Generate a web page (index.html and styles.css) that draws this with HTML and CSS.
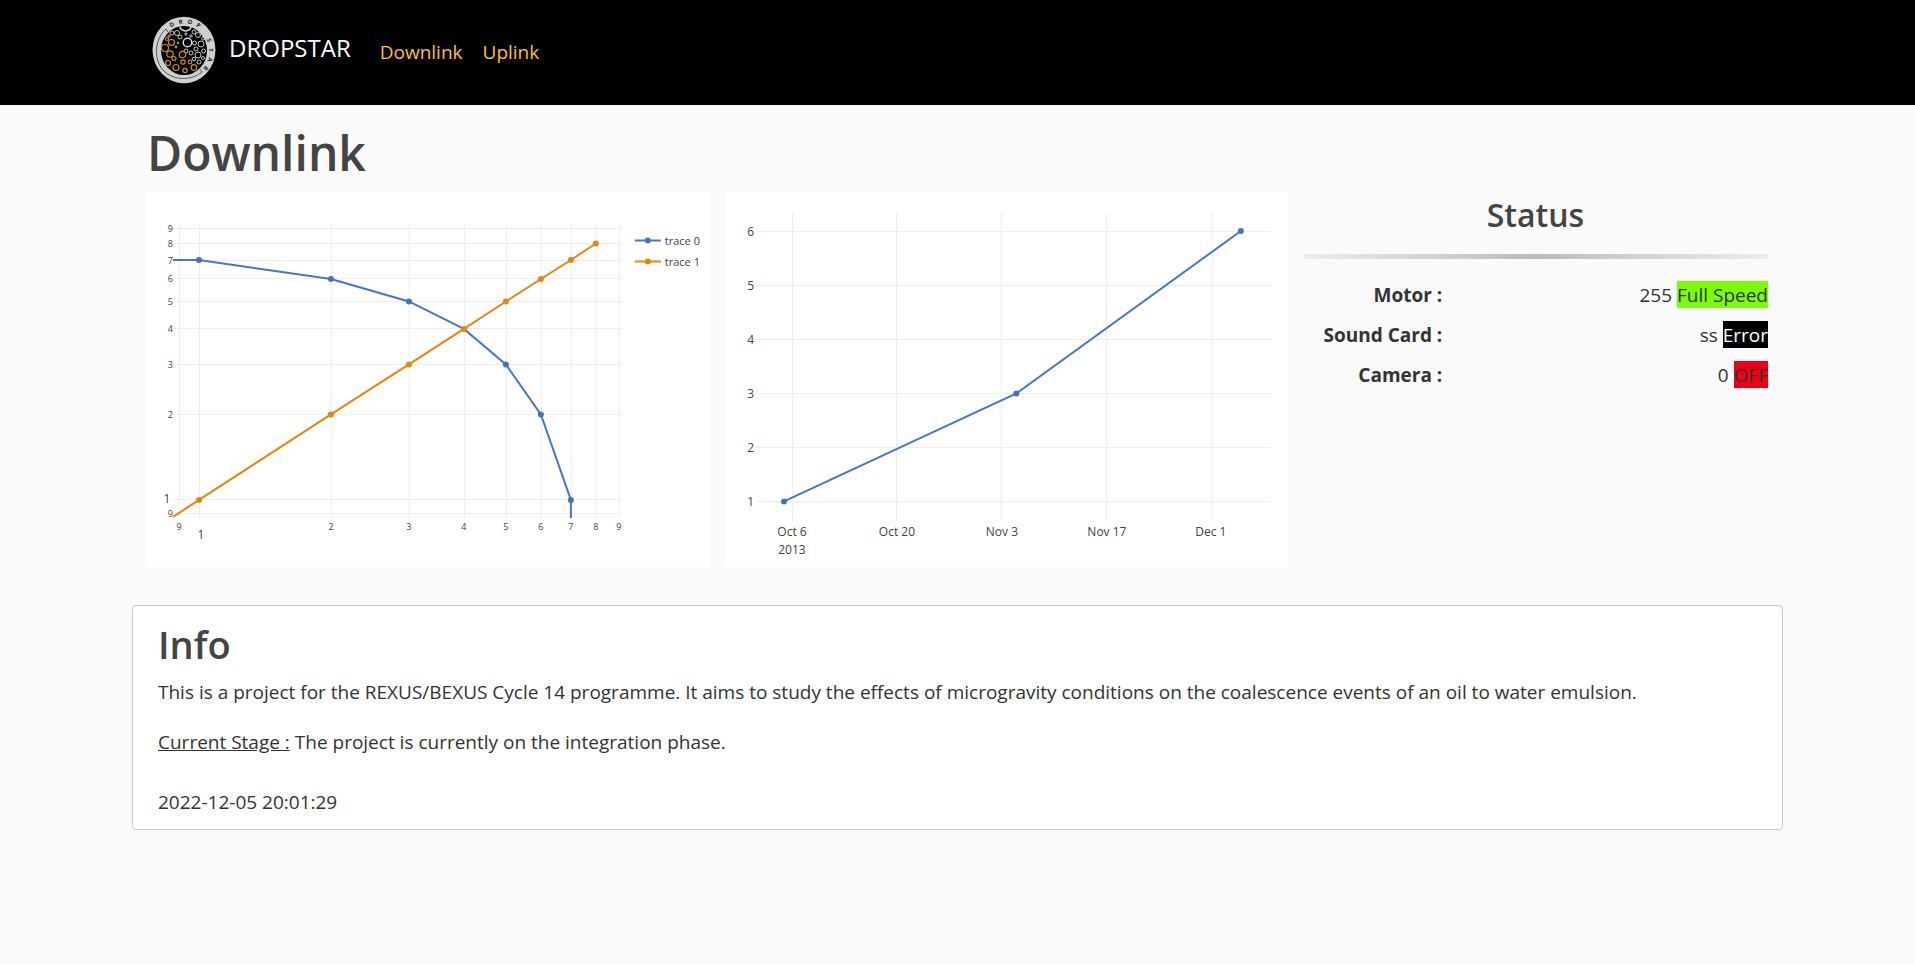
FILE: index.html
```html
<!DOCTYPE html>
<html lang="en">
<head>
<meta charset="utf-8">
<meta name="viewport" content="width=device-width, initial-scale=1">
<title>DROPSTAR - Downlink</title>
<link rel="stylesheet" href="styles.css">
</head>
<body>
<header class="navbar">
  <div class="container navbar-inner">
    <a class="brand" href="#">
      <svg class="brand-logo" viewBox="0 0 64 68" aria-hidden="true">
        <ellipse cx="32" cy="34" rx="31.5" ry="33.2" fill="#cfcfcf"/>
        <ellipse cx="32" cy="34.500" rx="23" ry="24.500" fill="#000"/>
        <path d="M16 16L14 13C3 22 1 43 11 54C21 65 39 65 50 56L48 53" fill="none" stroke="#555" stroke-width="1"/>
        <g class="ring-text">
          <text transform="translate(19.800 8.700) rotate(-26)" y="2">D</text>
          <text transform="translate(28.700 6) rotate(-8)" y="2">R</text>
          <text transform="translate(38 6) rotate(12)" y="2">O</text>
          <text transform="translate(46.500 9.500) rotate(30)" y="2">P</text>
          <text transform="translate(57 24) rotate(70)" y="2">S</text>
          <text transform="translate(59 34) rotate(90)" y="2">T</text>
          <text transform="translate(58 43.500) rotate(108)" y="2">A</text>
          <text transform="translate(53.500 52) rotate(128)" y="2">R</text>
        </g>
        <g fill="none" stroke="#d8d8d8" stroke-width="0.900">
          <path d="M28 10.500a5.500 4.500 0 0 0 11 0" stroke-width="1.500"/>
          <circle cx="35.500" cy="26.500" r="4.300" stroke-width="1.500"/>
          <circle cx="20" cy="17" r="2"/><circle cx="25" cy="17" r="2.500"/><circle cx="28" cy="21" r="2"/>
          <circle cx="42" cy="16" r="2"/><circle cx="46" cy="19" r="2.500"/><circle cx="42.500" cy="27" r="2"/><circle cx="34" cy="18" r="1.200"/><circle cx="39" cy="20" r="1.200"/>
          <circle cx="49" cy="28" r="3"/><circle cx="51" cy="22.500" r="1.500"/><circle cx="44" cy="33" r="2"/>
          <circle cx="34" cy="35" r="2"/><circle cx="39" cy="37" r="2"/><circle cx="46" cy="39" r="3"/>
          <circle cx="51.500" cy="35" r="2"/><circle cx="42" cy="43" r="1.800"/><circle cx="47" cy="46" r="2"/><circle cx="51" cy="42" r="1.500"/>
        </g>
        <g fill="none" stroke="#c8921a" stroke-width="1.200">
          <circle cx="19.500" cy="26.500" r="3"/><circle cx="13" cy="32" r="3.500"/><circle cx="18" cy="38" r="3.200"/>
          <circle cx="22" cy="42.500" r="2"/><circle cx="30.500" cy="38.500" r="3.200"/><circle cx="16" cy="47" r="2.500"/>
          <circle cx="24" cy="51.500" r="3"/><circle cx="31" cy="46" r="2.200"/><circle cx="38" cy="46" r="1.800"/>
          <circle cx="33" cy="54.500" r="2.200"/><circle cx="42" cy="51.500" r="2.800"/><circle cx="15" cy="23" r="1.500"/><circle cx="24" cy="31" r="0.800"/><circle cx="26" cy="27" r="0.600"/><circle cx="17" cy="20" r="1"/>
        </g>
      </svg>
      <span>DROPSTAR</span>
    </a>
    <nav class="nav-links">
      <a href="#">Downlink</a>
      <a href="#">Uplink</a>
    </nav>
  </div>
</header>

<main class="container">
  <h1 class="page-title">Downlink</h1>
  <div class="panels">
    <section class="panel">
      <svg class="chart" viewBox="0 0 563 375" role="img" aria-label="Trace 0 and trace 1, logarithmic axes">
        <path class="grid" d="M26 36.500H475M26 51.500H475M26 68.500H475M26 86.500H475M26 109.500H475M26 136.500H475M26 172.500H475M26 222.500H475M26 307.500H475M26 321.500H475M32.500 33V326M52.500 33V326M184.500 33V326M262.500 33V326M317.500 33V326M359.500 33V326M394.500 33V326M424.500 33V326M449.500 33V326M472.500 33V326"/>
        <g class="tick tick-small end">
          <text x="26" y="40">9</text><text x="26" y="55">8</text><text x="26" y="72">7</text><text x="26" y="90">6</text><text x="26" y="113">5</text><text x="26" y="140">4</text><text x="26" y="176">3</text><text x="26" y="226">2</text><text x="26" y="325">9</text>
        </g>
        <g class="tick tick-small middle">
          <text x="32" y="338">9</text><text x="184" y="338">2</text><text x="262" y="338">3</text><text x="317" y="338">4</text><text x="359" y="338">5</text><text x="394" y="338">6</text><text x="424" y="338">7</text><text x="449" y="338">8</text><text x="472" y="338">9</text>
        </g>
        <g class="tick tick-large middle"><text x="20" y="311">1</text><text x="54" y="347">1</text></g>
        <path class="line blue" d="M26 68H52L184 87L262 109.500L317 137L359 172.500L394 222.500L424 308V326"/>
        <g class="dot-blue"><circle cx="52" cy="68" r="3"/><circle cx="184" cy="87" r="3"/><circle cx="262" cy="109.500" r="3"/><circle cx="359" cy="172.500" r="3"/><circle cx="394" cy="222.500" r="3"/><circle cx="424" cy="308" r="3"/></g>
        <path class="line orange" d="M26 325L52 308L184 222.500L262 172.500L317 137L359 109.500L394 87L424 68L449 51.500"/>
        <g class="dot-orange"><circle cx="52" cy="308" r="3"/><circle cx="184" cy="222.500" r="3"/><circle cx="262" cy="172.500" r="3"/><circle cx="317" cy="137" r="3"/><circle cx="359" cy="109.500" r="3"/><circle cx="394" cy="87" r="3"/><circle cx="424" cy="68" r="3"/><circle cx="449" cy="51.500" r="3"/></g>
        <path class="line blue" d="M488 48.500H514"/><circle class="dot-blue" cx="501" cy="48.500" r="3"/>
        <path class="line orange" d="M488 69.500H514"/><circle class="dot-orange" cx="501" cy="69.500" r="3"/>
        <g class="tick"><text x="518" y="53">trace 0</text><text x="518" y="74">trace 1</text></g>
      </svg>
    </section>
    <section class="panel">
      <svg class="chart" viewBox="0 0 563 375" role="img" aria-label="Values from October to December 2013">
        <path class="grid" d="M31 39.500H546M31 93.500H546M31 147.500H546M31 201.500H546M31 255.500H546M31 309.500H546M67.500 20V329M171.500 20V329M276.500 20V329M381.500 20V329M487.500 20V329"/>
        <g class="tick tick-large end">
          <text x="29" y="44">6</text><text x="29" y="98">5</text><text x="29" y="152">4</text><text x="29" y="206">3</text><text x="29" y="260">2</text><text x="29" y="314">1</text>
        </g>
        <g class="tick tick-large middle">
          <text x="67" y="344">Oct 6</text><text x="67" y="362">2013</text><text x="172" y="344">Oct 20</text><text x="277" y="344">Nov 3</text><text x="382" y="344">Nov 17</text><text x="486" y="344">Dec 1</text>
        </g>
        <path class="line blue" d="M59 309.500L291.500 201.500L516 39"/>
        <g class="dot-blue"><circle cx="59" cy="309.500" r="3"/><circle cx="291.500" cy="201.500" r="3"/><circle cx="516" cy="39" r="3"/></g>
      </svg>
    </section>
    <section class="panel status">
      <h3 class="status-title">Status</h3>
      <hr class="status-rule">
      <table class="status-table">
        <tbody>
          <tr><th scope="row">Motor :</th><td>255 <span class="flag flag-on">Full Speed</span></td></tr>
          <tr><th scope="row">Sound Card :</th><td>ss <span class="flag flag-error">Error</span></td></tr>
          <tr><th scope="row">Camera :</th><td>0 <span class="flag flag-off">OFF</span></td></tr>
        </tbody>
      </table>
    </section>
  </div>
  <section class="card">
    <h2 class="card-title">Info</h2>
    <p class="card-text">This is a project for the REXUS/BEXUS Cycle 14 programme. It aims to study the effects of microgravity conditions on the coalescence events of an oil to water emulsion.</p>
    <p class="card-text"><u>Current Stage :</u> The project is currently on the integration phase.</p>
    <p class="card-date">2022-12-05 20:01:29</p>
  </section>
</main>
</body>
</html>
```
FILE: styles.css
```css
* { box-sizing: border-box; }

body {
  margin: 0;
  background: #fafafa;
  color: #333;
  font-family: "Open Sans", "Noto Sans", sans-serif;
  font-size: 19px;
  line-height: 30px;
}

h1, h2, h3 {
  margin: 0;
  color: #444;
  font-weight: 600;
}

.container {
  max-width: 1651px;
  margin: 0 auto;
}

.navbar { background: #000; }

.navbar-inner {
  display: flex;
  align-items: center;
  gap: 29px;
  padding: 16px 20px 21px;
}

.brand {
  display: flex;
  align-items: center;
  gap: 13px;
  color: #fff;
  font-size: 24px;
  text-decoration: none;
}

.brand span { padding-bottom: 4px; }

.brand-logo {
  width: 64px;
  height: 68px;
}

.ring-text {
  fill: #222;
  font-size: 6px;
  font-weight: 700;
  text-anchor: middle;
}

.nav-links {
  display: flex;
  gap: 20px;
  padding-top: 3px;
}

.nav-links a {
  color: #ffc02b;
  text-decoration: none;
}

.page-title {
  padding: 18px 15px 9px;
  font-size: 48px;
  line-height: 60px;
}

.panels {
  display: grid;
  grid-template-columns: 35fr 35fr 30fr;
}

.panel {
  min-width: 0;
  padding-left: 15px;
}

.status { padding-right: 15px; }

.chart {
  display: block;
  width: 100%;
  background: #fff;
}

.grid { fill: none; stroke: #eee; stroke-width: 1; }
.line { fill: none; stroke-width: 2; }
.blue { stroke: #4a76bf; }
.orange { stroke: #e8850c; }
.dot-blue { fill: #4a72b8; }
.dot-orange { fill: #e8850c; }
.tick { fill: #444; font-size: 11px; }
.tick-small { font-size: 9px; }
.tick-large { font-size: 12px; }
.end { text-anchor: end; }
.middle { text-anchor: middle; }

.status-title {
  padding-top: 2px;
  font-size: 32px;
  line-height: 42px;
  text-align: center;
}

.status-rule {
  height: 5px;
  margin: 18px 0 16px;
  border: 0;
  background: linear-gradient(to right, #eee, #bbb, #eee);
}

.status-table {
  width: 100%;
  border-collapse: collapse;
}

.status-table th,
.status-table td {
  height: 40px;
  padding: 0;
  text-align: right;
}

.status-table th {
  width: 30%;
  font-weight: 700;
  white-space: nowrap;
}

.flag { padding-top: 1px; }
.flag-on { background: #7cfc0a; }
.flag-error { background: #000; color: #fff; }
.flag-off { background: #f00014; }

.card {
  margin-top: 38px;
  padding: 14px 25px 12px;
  border: 1px solid #c8c8c8;
  border-radius: 4px;
  background: #fff;
}

.card-title {
  font-size: 38px;
  line-height: 48px;
}

.card-text { margin: 9px 0 20px; }
.card-date { margin: 30px 0 0; }
```
